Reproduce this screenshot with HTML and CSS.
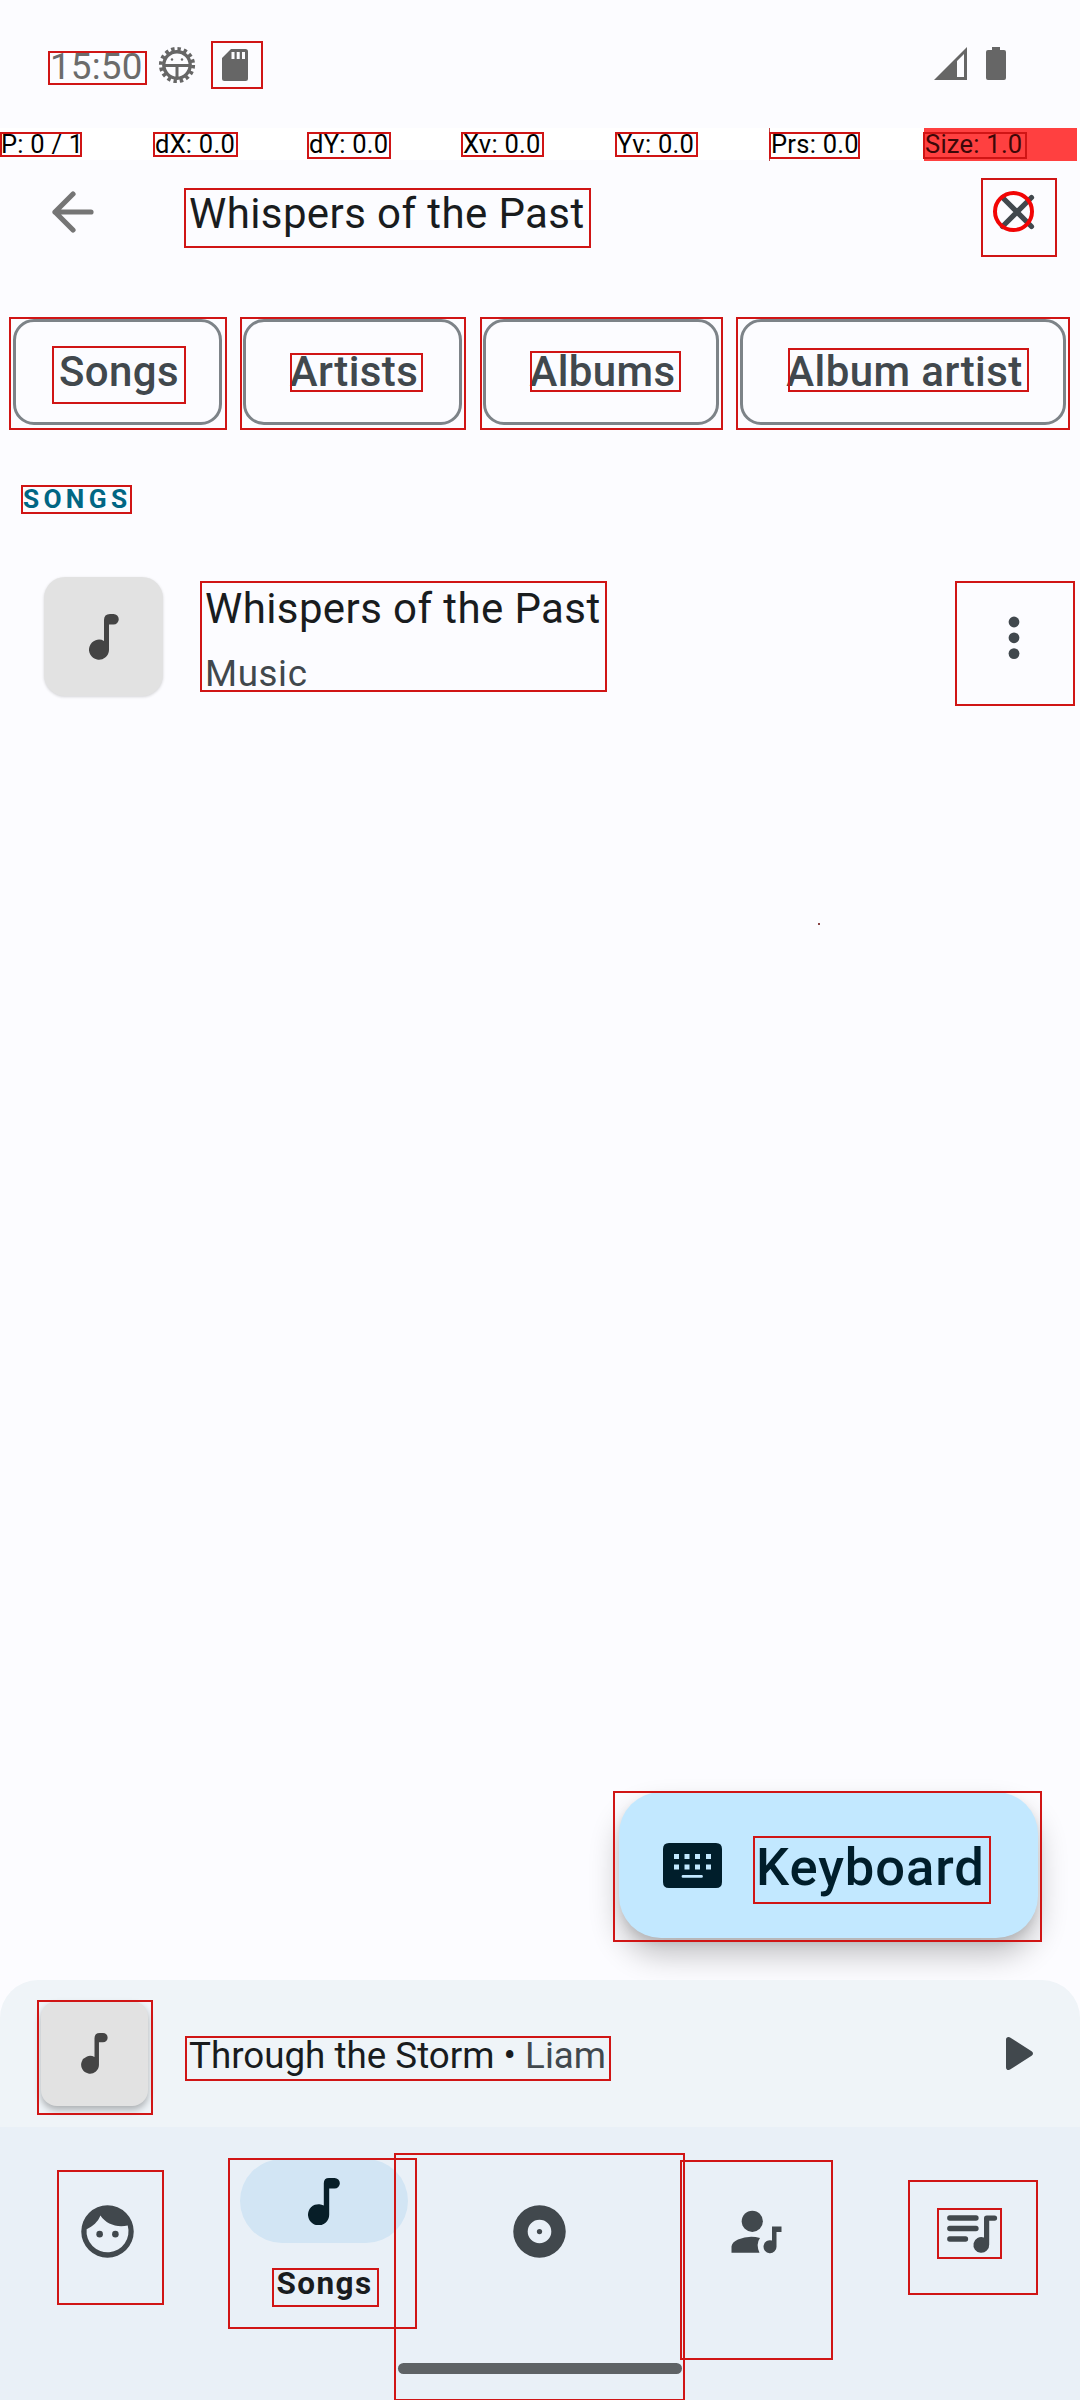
FILE: index.html
```html
<!DOCTYPE html>
<html lang="en">
<head>
<meta charset="utf-8">
<title>Music search</title>
<link rel="stylesheet" href="styles.css">
</head>
<body>
<div class="screen">
  <header class="status">
    <span class="time">15:50</span>
    <svg class="ic-debug" viewBox="0 0 38 38" width="38" height="38">
      <circle cx="19" cy="19" r="16.2" fill="none" stroke="#666" stroke-width="3.8" stroke-dasharray="3.4 2.96"/>
      <circle cx="19" cy="19" r="13.2" fill="none" stroke="#666" stroke-width="3.4"/>
      <path d="M6 19.500h26M19 20v12" stroke="#666" stroke-width="3"/>
      <circle cx="14" cy="13.500" r="1.200" fill="#666"/><circle cx="24" cy="13.500" r="1.200" fill="#666"/>
    </svg>
    <svg class="ic-sd" viewBox="0 0 26 32" width="26" height="32">
      <path fill="#666" fill-rule="evenodd" d="M9 0H23.500Q26 0 26 2.500V29.500Q26 32 23.500 32H2.500Q0 32 0 29.500V9zM9.500 3v7h3V3zM14.700 3v7h3V3zM20 3v7h3V3z"/>
    </svg>
    <svg class="ic-signal" viewBox="0 0 33 33" width="33" height="33">
      <path fill="#666" fill-rule="evenodd" d="M33 0V33H0zM23 14V30H30V7z"/>
    </svg>
    <svg class="ic-battery" viewBox="0 0 20 33" width="20" height="33">
      <path fill="#666" d="M6 0h8v3h4q2 0 2 2v26q0 2-2 2H2q-2 0-2-2V5q0-2 2-2h4z"/>
    </svg>
  </header>

  <div class="pointer">
    <span>P: 0 / 1</span><span>dX: 0.0</span><span>dY: 0.0</span><span>Xv: 0.0</span><span>Yv: 0.0</span><span class="prs">Prs: 0.0</span><span class="size">Size: 1.0</span>
  </div>

  <div class="search">
    <svg class="back" viewBox="0 0 42 42" width="42" height="42"><path d="M39 21H3M21 3L3 21L21 39" fill="none" stroke="#757575" stroke-width="5.200" stroke-linecap="round" stroke-linejoin="round"/></svg>
    <span class="query">Whispers of the Past</span>
    <svg class="close" viewBox="0 0 36 36" width="36" height="36"><path d="M3.500 3.500L32.500 32.500M32.500 3.500L3.500 32.500" stroke="#41484d" stroke-width="5.200" stroke-linecap="round"/></svg>
  </div>

  <div class="chips">
    <span class="chip c1">Songs</span><span class="chip c2">Artists</span><span class="chip c3">Albums</span><span class="chip c4">Album artist</span>
  </div>

  <main class="results">
    <h2 class="section">SONGS</h2>
    <div class="song">
      <div class="art"><svg viewBox="0 0 30 46" width="30" height="46"><path fill="#444" d="M15 27V6Q15 0 21 0H24.500A5 5 0 0 1 24.500 10.500H20V36A10 10 0 1 1 15 27z"/></svg></div>
      <div class="meta"><span class="name">Whispers of the Past</span><span class="sub">Music</span></div>
      <svg class="more" viewBox="0 0 12 44" width="12" height="44" fill="#41484d"><circle cx="6" cy="6" r="5.400"/><circle cx="6" cy="21.800" r="5.400"/><circle cx="6" cy="37.600" r="5.400"/></svg>
    </div>
    <div class="fab">
      <svg viewBox="0 0 59 45" width="59" height="45"><path fill="#001e2b" fill-rule="evenodd" d="M6 0H53Q59 0 59 6V39Q59 45 53 45H6Q0 45 0 39V6Q0 0 6 0zM11 11v5h5v-5zM21.500 11v5h5v-5zM32 11v5h5v-5zM43 11v5h5v-5zM11 21.500v5h5v-5zM21.500 21.500v5h5v-5zM32 21.500v5h5v-5zM43 21.500v5h5v-5zM20 32a1.400 1.400 0 0 0 0 2.800H38.500a1.400 1.400 0 0 0 0-2.800z"/></svg>
      <span>Keyboard</span>
    </div>
  </main>

  <section class="player">
    <div class="art small"><svg viewBox="0 0 30 46" width="27" height="41"><path fill="#444" d="M15 27V6Q15 0 21 0H24.500A5 5 0 0 1 24.500 10.500H20V36A10 10 0 1 1 15 27z"/></svg></div>
    <p class="track">Through the Storm • <span>Liam</span></p>
    <svg class="play" viewBox="0 0 27 33" width="27" height="33"><path fill="#41484d" d="M0 2.800Q0 0 2.600 0Q3.500 0 4.500.7L25.600 14.300Q27 15.300 27 16.500T25.600 18.700L4.500 32.300Q3.500 33 2.600 33Q0 33 0 30.200z"/></svg>
  </section>

  <nav class="nav">
    <div class="tab"><svg viewBox="0 0 24 24" width="63" height="63"><path fill="#41484d" fill-rule="evenodd" d="M12 2A10 10 0 1 0 12 22A10 10 0 1 0 12 2zM19.700 9.750A8 8 0 1 1 4.050 11.100C6.400 10.200 8.400 8.300 9.300 5.950C11.500 9.200 15.500 10.700 19.700 9.750z"/><circle cx="9" cy="13" r="1.250" fill="#41484d"/><circle cx="15" cy="13" r="1.250" fill="#41484d"/></svg></div>
    <div class="tab active">
      <div class="pill"><svg viewBox="0 0 32 47" width="32" height="47"><path fill="#071e28" d="M15.800 27.500V5.200Q15.800 0 21 0H26.600A5.200 5.200 0 0 1 26.600 10.500H21.200V36.500A10.600 10.600 0 1 1 15.800 27.500z"/></svg></div>
      <span>Songs</span>
    </div>
    <div class="tab"><svg viewBox="0 0 24 24" width="63" height="63"><path fill="#41484d" fill-rule="evenodd" d="M12 2A10 10 0 1 0 12 22A10 10 0 1 0 12 2zM12 7.500A4.500 4.500 0 1 1 12 16.500A4.500 4.500 0 1 1 12 7.500z"/><circle cx="12" cy="12" r="1" fill="#41484d"/></svg></div>
    <div class="tab"><svg viewBox="0 0 63 63" width="63" height="63" fill="#41484d"><circle cx="28.300" cy="21.300" r="10.600"/><path d="M7.500 52.700V46.500Q8 42 14 39.500Q25 35 36 38Q31.500 44 35.500 52.700zM48 26.600h9.500v5.300h-5V46.300A6.500 6.500 0 1 1 48 40.500z"/></svg></div>
    <div class="tab"><svg viewBox="0 0 63 63" width="63" height="63" fill="#41484d"><path d="M9.800 18H36M9.800 28.500H36M9.800 39H25.500" stroke="#41484d" stroke-width="5.300" stroke-linecap="round"/><path d="M44 37.500V18.200Q44 15.400 46.800 15.400H54.500A2.650 2.650 0 0 1 54.500 20.700H49.200V44.500A7.900 7.900 0 1 1 44 37.500z"/></svg></div>
  </nav>
  <div class="handle"></div>

  <div class="overlay">
    <i class="box b1"></i><i class="box b2"></i><i class="box b3"></i><i class="box b4"></i><i class="box b5"></i><i class="box b6"></i><i class="box b7"></i><i class="box b8"></i><i class="box b9"></i><i class="box b10"></i><i class="box b11"></i>
    <i class="box b12"></i><i class="box b13"></i><i class="box b14"></i><i class="box b15"></i><i class="box b16"></i><i class="box b17"></i><i class="box b18"></i><i class="box b19"></i><i class="box b20"></i><i class="box b21"></i><i class="box b22"></i>
    <i class="box b23"></i><i class="box b24"></i><i class="box b25"></i><i class="box b26"></i><i class="box b27"></i><i class="box b28"></i><i class="box b29"></i><i class="box b30"></i><i class="box b31"></i><i class="box b32"></i><i class="box b33"></i>
    <i class="touch"></i><i class="speck"></i>
  </div>
</div>
</body>
</html>
```
FILE: styles.css
```css
* { box-sizing: border-box; }
body { margin: 0; background: #fcfcff; font-family: Roboto, "Liberation Sans", sans-serif; color: #191c1e; }
svg { display: block; flex: none; }
span, p { white-space: nowrap; }
.screen { position: relative; width: 1080px; height: 2400px; overflow: hidden; display: flex; flex-direction: column; }

.status { height: 128px; display: flex; align-items: flex-start; padding: 0 74px 0 50px; color: #6b6b6b; flex: none; }
.time { width: 108px; margin-top: 44px; font-size: 36.75px; line-height: 45px; letter-spacing: .2px; }
.ic-debug { margin-top: 46px; }
.ic-sd { margin: 49px 0 0 26px; }
.ic-signal { margin: 47px 19px 0 auto; }
.ic-battery { margin-top: 47px; }

.pointer { height: 32px; flex: none; display: grid; grid-template-columns: repeat(7, 154px); background: #fff; color: #000; font-size: 25.5px; line-height: 33px; letter-spacing: .25px; }
.pointer span { padding-left: 1px; }
.pointer .prs { border-left: 1px solid #b44; margin-left: -1px; }
.pointer .size { background: #ff4040; color: #3c0808; width: 153px; }

.search { height: 104px; flex: none; display: flex; align-items: center; padding: 0 45px 0 52px; }
.back { margin-right: 95px; }
.query { font-size: 42px; line-height: 50px; padding-top: 4px; letter-spacing: .4px; }
.close { margin-left: auto; }

.chips { margin-top: 55px; height: 106px; flex: none; display: flex; gap: 21px; padding-left: 13px; }
.chip { border: 3px solid #7d8388; border-radius: 21px; display: flex; align-items: center; justify-content: center; font-size: 42px; font-weight: 500; line-height: 50px; letter-spacing: .42px; padding-left: 3px; color: #41484d; }
.c1 { width: 209px; }
.c2 { width: 219px; }
.c3 { width: 236px; }
.c4 { width: 326px; }

.results { flex: 1; display: flex; flex-direction: column; }
.section { margin: 59px 0 0 23px; font-size: 26.25px; line-height: 30px; font-weight: 700; letter-spacing: 4.3px; color: #006684; }
.song { margin-top: 63px; height: 120px; display: flex; padding: 0 60px 0 44px; }
.art { width: 119px; height: 119px; border-radius: 21px; background: #e2e2e2; box-shadow: 0 1px 3px rgba(0,0,0,.16); display: flex; align-items: center; justify-content: center; flex: none; }
.meta { margin: 7px 0 0 42px; display: flex; flex-direction: column; }
.name { font-size: 42px; line-height: 50px; letter-spacing: .4px; }
.sub { font-size: 36.75px; line-height: 44px; margin-top: 18px; color: #41484d; letter-spacing: .6px; }
.more { margin: 38.500px 0 0 auto; }

.fab { align-self: flex-end; margin: auto 42px 42px 0; width: 419px; height: 146px; border-radius: 42px; background: #c2e8ff; box-shadow: 0 17px 30px rgba(0,0,0,.24), 0 5px 10px rgba(0,0,0,.1); display: flex; align-items: center; padding-left: 44px; color: #001e2b; font-size: 52.5px; font-weight: 500; letter-spacing: .95px; }
.fab span { margin-left: 34px; line-height: 60px; padding-top: 4px; }

.player { height: 147px; flex: none; border-radius: 38px 38px 0 0; background: #eff4f8; display: flex; align-items: center; padding: 0 47px 0 41px; }
.small { width: 107px; height: 105px; border-radius: 16px; box-shadow: 0 4px 7px rgba(0,0,0,.28); }
.track { margin: 4px 0 0 41px; font-size: 36.75px; line-height: 44px; }
.track span { color: #41484d; }
.play { margin-left: auto; }

.nav { height: 236px; flex: none; background: #e9f0f7; display: grid; grid-template-columns: repeat(5, 216px); }
.tab { display: flex; flex-direction: column; align-items: center; padding-top: 72.500px; margin-left: -1px; }
.active { padding-top: 32px; margin: 0; }
.pill { width: 168px; height: 84px; border-radius: 42px; background: #d2e5f4; display: flex; align-items: center; justify-content: center; }
.active span { margin-top: 23px; font-size: 31.500px; line-height: 36px; font-weight: 700; letter-spacing: 1.400px; padding-left: 1px; }
.handle { flex: none; height: 37px; background: #e9f0f7; padding-left: 398px; }
.handle::before { content: ""; display: block; width: 284px; height: 11px; border-radius: 6px; background: #5e6265; }

/* Layout inspection frames drawn over the app */
.overlay { position: absolute; inset: 0; pointer-events: none; }
.box { position: absolute; border: 2px solid #d01515; }
.b1 { left: 48px; top: 51px; width: 99px; height: 34px; }
.b2 { left: 211px; top: 41px; width: 52px; height: 48px; }
.b3 { left: 0; top: 132px; width: 82px; height: 25px; }
.b4 { left: 153px; top: 132px; width: 85px; height: 25px; }
.b5 { left: 307px; top: 132px; width: 84px; height: 27px; }
.b6 { left: 461px; top: 132px; width: 83px; height: 25px; }
.b7 { left: 615px; top: 132px; width: 83px; height: 25px; }
.b8 { left: 769px; top: 132px; width: 91px; height: 27px; }
.b9 { left: 923px; top: 132px; width: 104px; height: 27px; }
.b10 { left: 184px; top: 188px; width: 407px; height: 60px; }
.b11 { left: 981px; top: 178px; width: 76px; height: 79px; }
.b12 { left: 9px; top: 317px; width: 218px; height: 113px; }
.b13 { left: 52px; top: 346px; width: 134px; height: 58px; }
.b14 { left: 240px; top: 317px; width: 226px; height: 113px; }
.b15 { left: 290px; top: 353px; width: 133px; height: 39px; }
.b16 { left: 480px; top: 317px; width: 243px; height: 113px; }
.b17 { left: 530px; top: 351px; width: 151px; height: 41px; }
.b18 { left: 736px; top: 317px; width: 334px; height: 113px; }
.b19 { left: 788px; top: 348px; width: 241px; height: 44px; }
.b20 { left: 21px; top: 485px; width: 111px; height: 29px; }
.b21 { left: 200px; top: 581px; width: 407px; height: 111px; }
.b22 { left: 955px; top: 581px; width: 120px; height: 125px; }
.b23 { left: 613px; top: 1791px; width: 429px; height: 151px; }
.b24 { left: 753px; top: 1836px; width: 238px; height: 68px; }
.b25 { left: 37px; top: 2000px; width: 116px; height: 115px; }
.b26 { left: 185px; top: 2036px; width: 426px; height: 45px; }
.b27 { left: 57px; top: 2170px; width: 107px; height: 135px; }
.b28 { left: 228px; top: 2158px; width: 189px; height: 171px; }
.b29 { left: 272px; top: 2268px; width: 107px; height: 39px; }
.b30 { left: 394px; top: 2153px; width: 291px; height: 248px; }
.b31 { left: 680px; top: 2160px; width: 153px; height: 200px; }
.b32 { left: 908px; top: 2180px; width: 130px; height: 115px; }
.b33 { left: 937px; top: 2208px; width: 65px; height: 51px; }
.touch { position: absolute; left: 993px; top: 191px; width: 41px; height: 41px; border: 4px solid #f20505; border-radius: 50%; }
.speck { position: absolute; left: 818px; top: 923px; width: 2px; height: 2px; background: #844; }
```
